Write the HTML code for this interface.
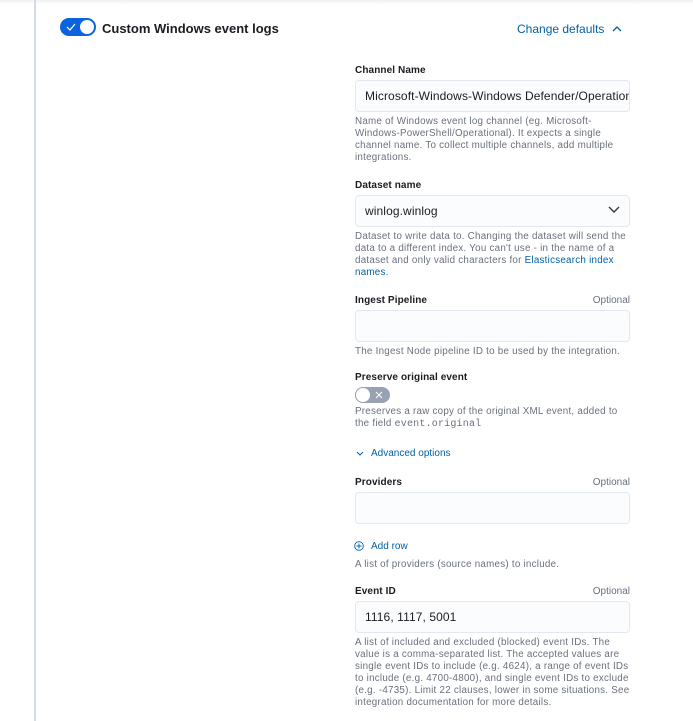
<!DOCTYPE html>
<html><head><style>
body{margin:0;width:693px;height:721px;background:#fff;font-family:"Liberation Sans",sans-serif;position:relative;overflow:hidden;color:#343741}
.a{position:absolute}
.top{left:0;top:0;width:693px;height:4px;background:linear-gradient(#eef0f3,#fff)}
.vl{left:34px;top:0;width:2px;height:721px;background:#d3dae6}
.lbl{left:355px;font-size:10px;font-weight:bold;color:#1a1c21;letter-spacing:.1px}
.opt{right:63px;font-size:10px;color:#69707d}
.inp{left:355px;border:1px solid #e3e8f0;border-radius:4px;background:#fbfcfd;font-size:12px;line-height:30px;padding-left:9px;box-sizing:border-box;width:275px;height:32px;color:#1a1c21;white-space:nowrap;overflow:hidden;letter-spacing:.1px}
.help{left:355px;width:275px;font-size:9.8px;line-height:12px;color:#69707d;letter-spacing:.25px}
.link{color:#0061a6}
.blue{color:#0061a6;font-size:10px}
code{font-family:"Liberation Mono",monospace;font-size:10px;letter-spacing:.2px}
</style></head><body>
<div class="a top"></div>
<div class="a vl"></div>
<div class="a" style="left:60px;top:18px;width:36px;height:18px;border-radius:9px;background:#0b64dd"></div>
<svg class="a" style="left:66px;top:22px" width="10" height="10"><path d="M1 5l3 3 5-6" stroke="#fff" stroke-width="1.2" fill="none"/></svg>
<div class="a" style="left:79px;top:19px;width:16px;height:16px;border-radius:50%;background:#fff;box-sizing:border-box;border:1px solid #0b64dd"></div>
<div class="a" style="left:102px;top:21px;font-size:13px;font-weight:bold;color:#1a1c21">Custom Windows event logs</div>
<div class="a blue" style="left:517px;top:22px;font-size:12px">Change defaults</div>
<svg class="a" style="left:611px;top:24px" width="12" height="10"><path d="M2 7l4-4 4 4" stroke="#0061a6" stroke-width="1.3" fill="none"/></svg>

<div class="a lbl" style="top:65px">Channel Name</div>
<div class="a inp" style="top:80px">Microsoft-Windows-Windows Defender/Operational</div>
<div class="a help" style="top:116px">Name of Windows event log channel (eg. Microsoft-Windows-PowerShell/Operational). It expects a single channel name. To collect multiple channels, add multiple integrations.</div>

<div class="a lbl" style="top:180px">Dataset name</div>
<div class="a inp" style="top:195px">winlog.winlog</div>
<svg class="a" style="left:607px;top:205px" width="14" height="10"><path d="M2 2l5 5 5-5" stroke="#343741" stroke-width="1.4" fill="none"/></svg>
<div class="a help" style="top:231px">Dataset to write data to. Changing the dataset will send the data to a different index. You can't use - in the name of a dataset and only valid characters for <span class="link">Elasticsearch index names</span>.</div>

<div class="a lbl" style="top:295px">Ingest Pipeline</div>
<div class="a opt" style="top:295px">Optional</div>
<div class="a inp" style="top:310px"></div>
<div class="a help" style="top:346px">The Ingest Node pipeline ID to be used by the integration.</div>

<div class="a lbl" style="top:372px">Preserve original event</div>
<div class="a" style="left:355px;top:387px;width:35px;height:16px;border-radius:8px;background:#98a2b3"></div>
<div class="a" style="left:355px;top:387px;width:16px;height:16px;border-radius:50%;background:#fff;box-sizing:border-box;border:1px solid #98a2b3"></div>
<svg class="a" style="left:375px;top:391px" width="8" height="8"><path d="M1 1l6 6M7 1l-6 6" stroke="#fff" stroke-width="1"/></svg>
<div class="a help" style="top:406px">Preserves a raw copy of the original XML event, added to the field <code>event.original</code></div>

<svg class="a" style="left:356px;top:450px" width="8" height="8"><path d="M1 2l3 3 3-3" stroke="#0061a6" stroke-width="1" fill="none"/></svg>
<div class="a blue" style="left:371px;top:448px">Advanced options</div>

<div class="a lbl" style="top:477px">Providers</div>
<div class="a opt" style="top:477px">Optional</div>
<div class="a inp" style="top:492px"></div>
<svg class="a" style="left:354px;top:541px" width="10" height="10"><circle cx="5" cy="5" r="4.3" stroke="#0061a6" fill="none" stroke-width=".9"/><path d="M5 2.5v5M2.5 5h5" stroke="#0061a6" stroke-width=".9"/></svg>
<div class="a blue" style="left:371px;top:541px">Add row</div>
<div class="a help" style="top:559px">A list of providers (source names) to include.</div>

<div class="a lbl" style="top:586px">Event ID</div>
<div class="a opt" style="top:586px">Optional</div>
<div class="a inp" style="top:601px">1116, 1117, 5001</div>
<div class="a help" style="top:637px">A list of included and excluded (blocked) event IDs. The value is a comma-separated list. The accepted values are single event IDs to include (e.g. 4624), a range of event IDs to include (e.g. 4700-4800), and single event IDs to exclude (e.g. -4735). Limit 22 clauses, lower in some situations. See integration documentation for more details.</div>
</body></html>
